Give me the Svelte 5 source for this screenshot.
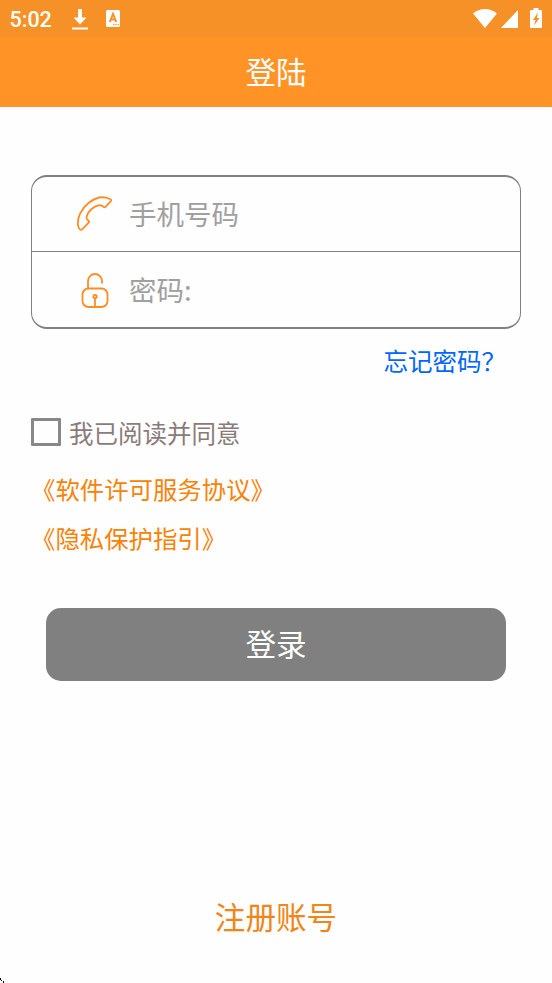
<script>
    let phone = '';
    let password = '';
    let agreed = false;
</script>

<div class="screen">
    <div class="status-bar">
        <span class="time">5:02</span>
        <svg class="download" width="16" height="21" viewBox="0 0 16 21">
            <path d="M6 0h4v8.5h4.5L8 15.5L1.5 8.5H6zM0 18.5h16v2H0z" fill="#fff"/>
        </svg>
        <svg class="app" width="14" height="17" viewBox="0 0 14 17">
            <rect width="14" height="17" rx="1.5" fill="#fff"/>
            <path d="M3.8 12L7 4l3.2 8M5 9.6h4" fill="none" stroke="#f59127" stroke-width="2"/>
            <path d="M7 14.7h6" stroke="#f59127" stroke-dasharray="1.5 .7"/>
        </svg>
        <svg class="wifi" width="24" height="19" viewBox="0 0 24 19">
            <path d="M0 4.5C7-1.5 17-1.5 24 4.5L12 19z" fill="#fff"/>
        </svg>
        <svg class="signal" width="17" height="18" viewBox="0 0 17 18">
            <path d="M17 0v18H0z" fill="#fff"/>
        </svg>
        <svg class="battery" width="12" height="20" viewBox="0 0 12 20">
            <path d="M3.5 0h5v2H11q1 0 1 1v16q0 1-1 1H1q-1 0-1-1V3q0-1 1-1h2.5z" fill="#fff"/>
            <path d="M8 4.5L3 12h2.5L4 17.5L9.5 10H7z" fill="#f59127"/>
        </svg>
    </div>
    <header>登陆</header>

    <form on:submit|preventDefault>
        <div class="fields">
            <label class="field">
                <svg width="38" height="38" viewBox="0 0 38 38">
                    <path d="M2 30C1 23 5 14 12.5 8C19 2.8 27 .8 33.5 3.8Q36 4.8 34.8 6.2L29.8 11.6Q28.5 12.9 27.3 11.6C25 9.3 20.5 10 16.5 13.2C13 16 11.2 19 10.6 22Q10.2 24 12 25.2Q13.8 26.5 12.8 27.5L6.8 33.8Q4.8 35.8 3.4 33.8Q2.3 32.3 2 30z"/>
                </svg>
                <input type="tel" placeholder="手机号码" bind:value={phone} />
            </label>
            <label class="field">
                <svg width="38" height="38" viewBox="0 0 38 38">
                    <path d="M12 17.5V10a7 7 0 0 1 14 0V12.5"/>
                    <rect x="6.5" y="17.5" width="25" height="18.5" rx="6"/>
                    <circle cx="19" cy="25.5" r="1.7"/>
                    <path d="M19 27.5v8.5"/>
                </svg>
                <input type="password" placeholder="密码:" bind:value={password} />
            </label>
        </div>
        <a class="forgot" href="#forgot">忘记密码？</a>

        <label class="agree">
            <input type="checkbox" bind:checked={agreed} />
            <span>我已阅读并同意</span>
        </label>
        <a class="doc" href="#license">《软件许可服务协议》</a>
        <a class="doc" href="#privacy">《隐私保护指引》</a>

        <button type="submit">登录</button>
    </form>
    <a class="register" href="#register">注册账号</a>
    <svg class="corner" width="5" height="5" viewBox="0 0 5 5">
        <path d="M0 0h1v2H0zM1 2h1v1H1zM3 3h1v2H3z"/>
    </svg>
</div>

<style>
    :global(body){
        background-color: #fefefe;
    }

    .screen{
        position: relative;
        height: 983px;
        overflow: hidden;
        display: flex;
        flex-direction: column;
        font-family: "Noto Sans CJK SC", sans-serif;
    }

    a{
        text-decoration: none;
    }

    .status-bar{
        flex: none;
        height: 37px;
        box-sizing: border-box;
        padding: 0 10px 0 9.5px;
        display: flex;
        align-items: center;
        background-color: #f59127;
        color: #fff;
    }

    .time{
        width: 62.5px;
        padding-top: 1px;
        font: 500 21.5px/37px Roboto, sans-serif;
    }

    .download{
        margin-top: 1px;
    }

    .app{
        margin-left: 18px;
    }

    .wifi{
        margin-left: auto;
    }

    .signal{
        margin-left: 4px;
        margin-top: 1px;
    }

    .battery{
        margin-left: 12px;
        margin-bottom: 1px;
    }

    header{
        flex: none;
        height: 70px;
        line-height: 68px;
        background-color: #ff9326;
        color: #fff;
        font-size: 30.6px;
        text-align: center;
    }

    form{
        display: flex;
        flex-direction: column;
        padding: 68px 31px 0;
    }

    .fields{
        height: 154px;
        box-sizing: border-box;
        border: 1.5px solid #808080;
        border-width: 2px 1.5px;
        border-radius: 16px;
        display: flex;
        flex-direction: column;
    }

    .field{
        height: 74px;
        display: flex;
        align-items: center;
        padding-left: 44px;
    }

    .field + .field{
        height: 75px;
        border-top: 1px solid #808080;
    }

    .field svg{
        flex: none;
        fill: none;
        stroke: #ff8c26;
        stroke-width: 1.8;
    }

    .field input{
        flex: 1;
        min-width: 0;
        margin-left: 15px;
        padding: 0 0 2px;
        border: 0;
        outline: 0;
        background: none;
        font: 27.5px/42px "Noto Sans CJK SC", sans-serif;
    }

    .field input::placeholder{
        color: #a0a0a0;
    }

    .forgot{
        align-self: flex-end;
        margin-top: 12px;
        color: #0066ff;
        font-size: 24.5px;
        line-height: 40px;
        width: 137.5px;
    }

    .agree{
        display: flex;
        align-items: center;
        margin-top: 31px;
        height: 40px;
        color: #8a7b7b;
        font-size: 24.5px;
    }

    .agree input{
        appearance: none;
        width: 30px;
        height: 28px;
        margin: 0 8px 0 0;
        border: 3px solid #888;
        border-radius: 1px;
    }

    .agree input:checked{
        background-color: #ff9326;
    }

    .doc{
        margin-top: 20px;
        height: 33px;
        line-height: 33px;
        font-size: 24.4px;
        color: #f98207;
    }

    .doc + .doc{
        margin-top: 16px;
    }

    button{
        height: 73px;
        margin: 54px 15px 0;
        padding: 0 0 3px;
        border: 0;
        border-radius: 15px;
        background-color: #808080;
        color: #fff;
        font: 30.6px "Noto Sans CJK SC", sans-serif;
    }

    .register{
        align-self: center;
        margin-top: 210px;
        line-height: 50px;
        font-size: 30.6px;
        color: #f08519;
    }

    .corner{
        position: absolute;
        left: 0;
        bottom: 0;
    }
</style>
